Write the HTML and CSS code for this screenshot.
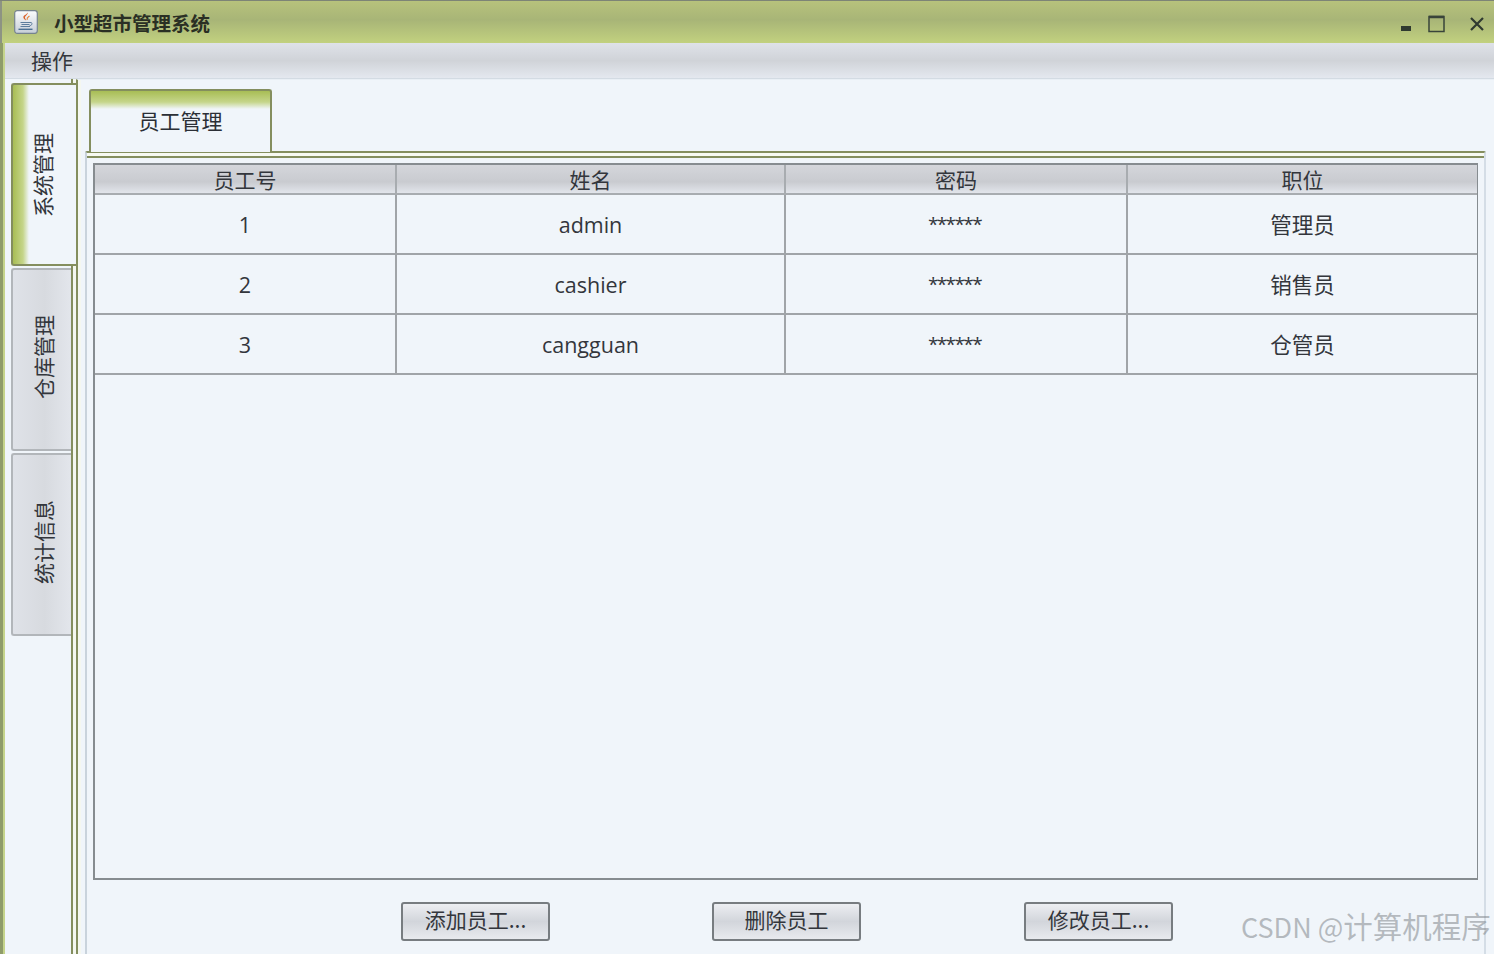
FILE: index.html
```html
<!DOCTYPE html>
<html lang="zh-CN">
<head>
<meta charset="utf-8">
<title>小型超市管理系统</title>
<link rel="stylesheet" href="styles.css">
</head>
<body>
<div class="window">
  <header class="titlebar">
    <svg class="app-icon" width="24" height="24" viewBox="0 0 24 24">
      <defs><linearGradient id="ig" x1="0" y1="0" x2="0" y2="1"><stop offset="0" stop-color="#fbfcfd"/><stop offset="1" stop-color="#c6ced8"/></linearGradient></defs>
      <rect x="0.7" y="0.7" width="22.6" height="22.6" rx="2.5" fill="url(#ig)" stroke="#76838f" stroke-width="1.2"/>
      <path d="M13.500 2.500c1 2-3 3.500-2.500 5.500.3 1 1 1.800 1.200 2.600-1.800-1-3.200-2.600-2.800-4.200C10 5 13 4.500 13.500 2.500z" fill="#d9622b"/>
      <path d="M15.500 6c-1.200 1-3 1.700-2.300 3.800" fill="none" stroke="#e5863f" stroke-width="1.100"/>
      <path d="M6.500 12.500h9.500M7.500 14.500h8M6.500 16.500h9.500" stroke="#5d7d9c" stroke-width="1.200" fill="none"/>
      <path d="M16 12.500c2.800-.5 2.800 2.800-.5 3.300" stroke="#5d7d9c" stroke-width="1" fill="none"/>
      <path d="M4.500 19.300h14" stroke="#4c7093" stroke-width="1.400"/>
    </svg>
    <span class="app-title">小型超市管理系统</span>
    <div class="win-controls">
      <svg class="win-btn" width="12" height="24" viewBox="0 0 12 24"><rect x="1" y="14" width="10" height="5" fill="#2f3a30"/></svg>
      <svg class="win-btn win-max" width="18" height="18" viewBox="0 0 18 18"><rect x="1" y="1.500" width="15" height="15" fill="none" stroke="#39443a" stroke-width="1.500"/><path d="M1 2h15" stroke="#39443a" stroke-width="2.500"/></svg>
      <svg class="win-btn win-close" width="16" height="16" viewBox="0 0 16 16"><path d="M2 2l12 12M14 2L2 14" stroke="#2f3a30" stroke-width="2.200" fill="none"/></svg>
    </div>
  </header>
  <nav class="menubar"><span class="menu-item">操作</span></nav>
  <main class="main">
    <aside class="side-tabs">
      <div class="side-tab side-tab-active"><span class="side-label">系统管理</span></div>
      <div class="side-tab"><span class="side-label">仓库管理</span></div>
      <div class="side-tab"><span class="side-label">统计信息</span></div>
    </aside>
    <section class="outer-pane">
      <div class="tab-strip">
        <div class="top-tab">员工管理</div>
      </div>
      <div class="inner-pane">
        <div class="table-box">
          <table class="grid">
            <colgroup><col class="c1"><col class="c2"><col class="c3"><col class="c4"></colgroup>
            <thead><tr><th>员工号</th><th>姓名</th><th>密码</th><th>职位</th></tr></thead>
            <tbody>
              <tr><td>1</td><td>admin</td><td class="pw">******</td><td>管理员</td></tr>
              <tr><td>2</td><td>cashier</td><td class="pw">******</td><td>销售员</td></tr>
              <tr><td>3</td><td>cangguan</td><td class="pw">******</td><td>仓管员</td></tr>
            </tbody>
          </table>
        </div>
        <div class="actions">
          <button class="btn">添加员工...</button>
          <button class="btn">删除员工</button>
          <button class="btn">修改员工...</button>
        </div>
      </div>
    </section>
  </main>
  <div class="watermark">CSDN @<span class="watermark-cjk">计算机程序</span></div>
</div>
</body>
</html>
```
FILE: styles.css
```css
* { box-sizing: border-box; }
html, body { margin: 0; height: 100%; overflow: hidden; }
body { font-family: "Open Sans", "Noto Sans CJK SC", sans-serif; color: #2b2f36; background: #f0f5fa; }
.window { position: relative; width: 1494px; height: 954px; display: flex; flex-direction: column; overflow: hidden; border-top: 1px solid #7d8476; background: linear-gradient(90deg, #8f9c6a 3px, #c5d48b 3px); }
.titlebar { height: 42px; flex: none; display: flex; align-items: center; padding: 0 9px 0 12px; border-left: 2px solid #8d9383; background: linear-gradient(#b7c27c 0, #a8b577 45%, #c2d17f 100%); }
.app-icon { flex: none; }
.app-title { margin-left: 16px; font: 700 19.5px/1 "Noto Sans CJK SC", sans-serif; color: #2a2f24; margin-top: 1px; }
.win-controls { margin-left: auto; display: flex; align-items: center; margin-top: 3px; }
.win-btn { display: block; flex: none; }
.win-max { margin-left: 16px; }
.win-close { margin-left: 23px; }
.menubar { height: 36px; flex: none; display: flex; align-items: center; margin-left: 5px; background: linear-gradient(#dfe2e9 0, #d0d3d8 50%, #e4e8ef 100%); border-bottom: 1px solid #d3dbe3; }
.menu-item { margin-left: 26px; font: 400 21px/1 "Noto Sans CJK SC", sans-serif; color: #33363c; }
.main { flex: 1; min-height: 0; display: flex; align-items: stretch; background: #f0f5fa; margin-left: 5px; }
.side-tabs { width: 71px; flex: none; display: flex; flex-direction: column; gap: 2px; padding: 4px 0 0 6px; }
.side-tab { height: 183px; flex: none; display: flex; align-items: center; justify-content: center; border: 2px solid #b2b6ba; border-right: 0; border-radius: 3px 0 0 3px; background: linear-gradient(90deg, #dfe2e8, #d7dadf 50%, #e5e8ee); padding: 0 3px 5px 0; }
.side-tab-active { width: 65px; position: relative; z-index: 1; border: 2px solid #848e5e; border-right: 0; background: linear-gradient(90deg, #a8bd55 0, #c5d58a 10px, #f0f5fa 16px); padding: 0 5px 0 0; }
.side-label { writing-mode: vertical-rl; text-orientation: sideways; transform: rotate(180deg); font: 400 21px/1 "Noto Sans CJK SC", sans-serif; color: #33363c; }
.outer-pane { flex: 1; min-width: 0; display: flex; flex-direction: column; border-left: 2px solid #848e5e; box-shadow: inset 3px 0 0 #f4f7f0, -3px 0 0 #f4f7f0, -5px 0 0 #848e5e; border-top: 1px solid #e9eff5; padding: 9px 8px 0 7px; }
.tab-strip { height: 62px; flex: none; display: flex; padding-left: 4px; }
.top-tab { width: 183px; height: 63px; position: relative; z-index: 1; display: flex; align-items: center; justify-content: center; padding-bottom: 2px; border: 2px solid #848e5e; border-bottom: 0; border-radius: 3px 3px 0 0; background: linear-gradient(#a8bd55 0, #c5d58a 11px, #f0f5fa 18px); font: 400 21px/1 "Noto Sans CJK SC", sans-serif; color: #2b2f36; }
.inner-pane { flex: 1; min-height: 0; display: flex; flex-direction: column; border: 2px solid #848e5e; border-bottom: 0; border-right-color: #d4dde6; border-left-color: #c9d3dc; padding: 10px 6px 0 6px; box-shadow: inset 0 3px 0 #f7faf2, inset 0 5px 0 #848e5e; border-radius: 2px 2px 0 0; }
.table-box { height: 717px; flex: none; border: 2px solid #868c90; border-width: 2px 1px 2px 2px; background: #f0f5fa; }
.grid { width: 100%; border-collapse: separate; border-spacing: 0; table-layout: fixed; }
.c1 { width: 302px; } .c2 { width: 389px; } .c3 { width: 342px; }
.grid th { height: 30px; padding: 0; font: 400 21px/1 "Noto Sans CJK SC", sans-serif; color: #33363c; background: linear-gradient(#d4d6db 0, #c9cbd0 60%, #e2e5eb 100%); border-right: 2px solid #a8acb0; border-bottom: 2px solid #a8acb0; }
.grid td { height: 60px; padding: 2px 0 0; text-align: center; font-size: 21.5px; line-height: 1; color: #33363c; font-family: "Open Sans", "Noto Sans CJK SC", sans-serif; border-right: 2px solid #a0a4a8; border-bottom: 2px solid #a0a4a8; }
.grid th:last-child, .grid td:last-child { border-right: 0; }
.grid td.pw { padding: 0 3px 0 0; font-size: 19px; letter-spacing: -1.6px; }
.actions { flex: 1; display: grid; grid-template-columns: repeat(3, 149px); justify-content: start; column-gap: 162px; padding: 22px 0 0 308px; }
.btn { height: 39px; width: 149px; padding: 0 0 4px; border: 2px solid #777c80; border-radius: 3px; background: linear-gradient(#eceef2 0, #d2d5db 50%, #e8eaee 100%); font: 400 21px/1 "Noto Sans CJK SC", sans-serif; color: #33363c; }
.actions .btn:last-child { margin-left: 1px; }
.watermark { position: absolute; left: 1241px; top: 907px; font: 400 27px/1.2 "Noto Sans CJK SC", sans-serif; color: rgba(120,125,130,.5); white-space: nowrap; }
.watermark-cjk { font-size: 29.5px; }
```
